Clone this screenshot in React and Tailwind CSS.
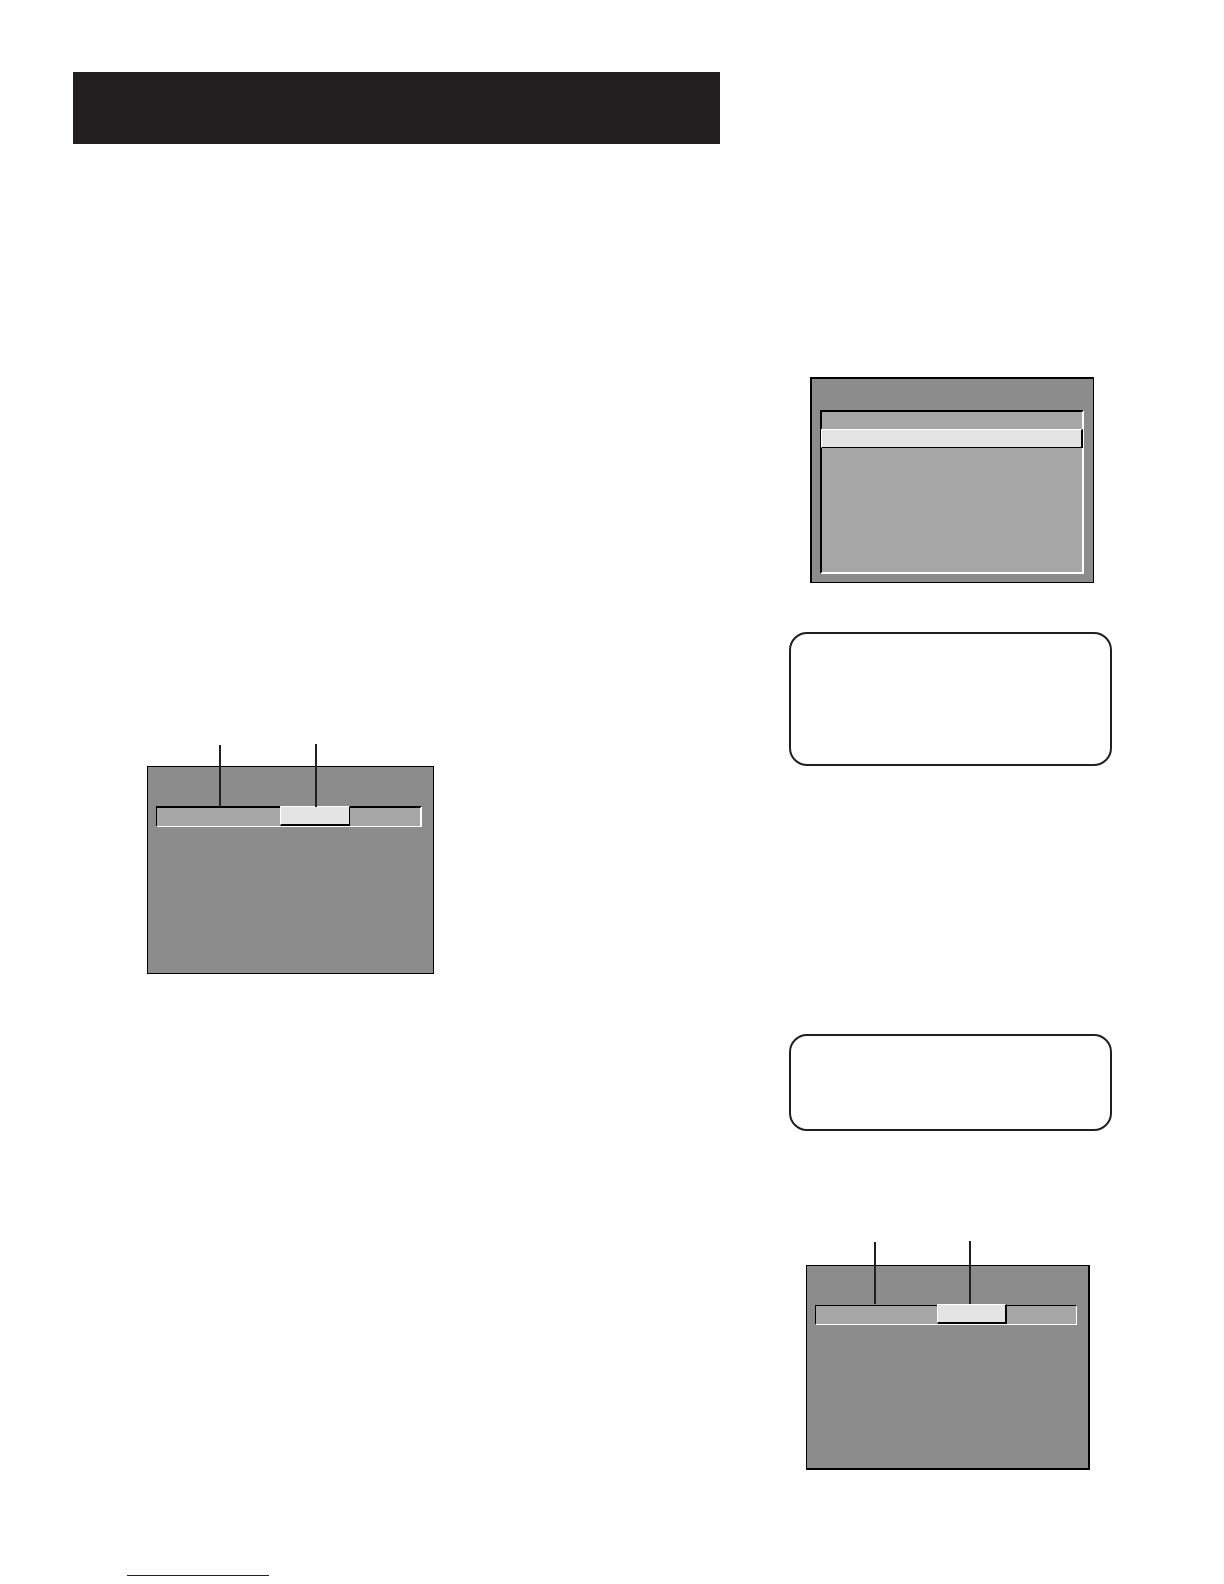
const MenuList = () => {
  return (
    <div className="mr-[18px] ml-[22px] h-[206px] border border-t-2 border-l-2 border-black bg-[#8c8c8c] pt-[31px] pr-[9px] pb-2 pl-2">
      <ul className="h-full border-2 border-t-black border-r-white border-b-white border-l-black bg-[#a6a6a6]">
        <li className="h-[17px]"></li>
        <li className="-mx-px h-[19px] border border-r-2 border-t-white border-r-black border-b-black border-l-white bg-[#e4e4e4]"></li>
      </ul>
    </div>
  );
};

const Note = ({ className }) => {
  return (
    <aside
      className={`ml-px rounded-[18px] border-2 border-[#231f20] bg-white ${className}`}
    ></aside>
  );
};

// a menu bar with two pointer lines that rise above the panel
const MenuBar = ({ className, panel, bar, spacer, selected, pointers }) => {
  return (
    <figure className={`relative ${className}`}>
      <div className={`border-black bg-[#8c8c8c] pt-[39px] pr-[11px] pl-2 ${panel}`}>
        <div
          className={`flex border-t-black border-r-white border-b-white border-l-black bg-[#a6a6a6] ${bar}`}
        >
          <div className={`h-[18px] ${spacer}`}></div>
          <div
            className={`-mt-0.5 h-5 w-[70px] border-t-white border-r-black border-b-black border-l-white bg-[#e4e4e4] ${selected}`}
          ></div>
        </div>
      </div>
      {pointers.map((pointer) => (
        <span
          key={pointer}
          className={`absolute w-0.5 bg-[#231f20] ${pointer}`}
        ></span>
      ))}
    </figure>
  );
};

export default function App() {
  return (
    <div className="min-h-screen bg-white pt-18 pr-28 pl-[73px] font-['Liberation_Sans',sans-serif]">
      <main className="flex gap-[68px]">
        <section className="flex-1">
          <header className="h-18 bg-[#231f20]"></header>
          <MenuBar
            className="mt-[600px] ml-[74px] w-[287px] pt-[22px]"
            panel="h-[208px] border"
            bar="border-t-2 border-r-2 border-b border-l"
            spacer="w-[123px]"
            selected="border border-b-2"
            pointers={["top-px left-[72px] h-[62px]", "top-0 left-[168px] h-[63px]"]}
          />
        </section>
        <section className="w-[324px] pt-[305px]">
          <MenuList />
          <Note className="mt-[49px] h-[134px]" />
          <Note className="mt-[268px] h-[97px]" />
          <MenuBar
            className="mt-[110px] mr-[22px] ml-[18px] pt-6"
            panel="h-[205px] border border-r-2 border-b-2"
            bar="border"
            spacer="w-[121px]"
            selected="border border-r-2 border-b-2"
            pointers={["top-px left-[68px] h-[62px]", "top-0 left-[163px] h-[63px]"]}
          />
        </section>
      </main>
      <footer className="pt-[89px] pb-2">
        <a
          href="#"
          aria-label="Website"
          className="ml-[54px] block h-[17px] w-[142px] border-b border-[#14148a]"
        ></a>
      </footer>
    </div>
  );
}
